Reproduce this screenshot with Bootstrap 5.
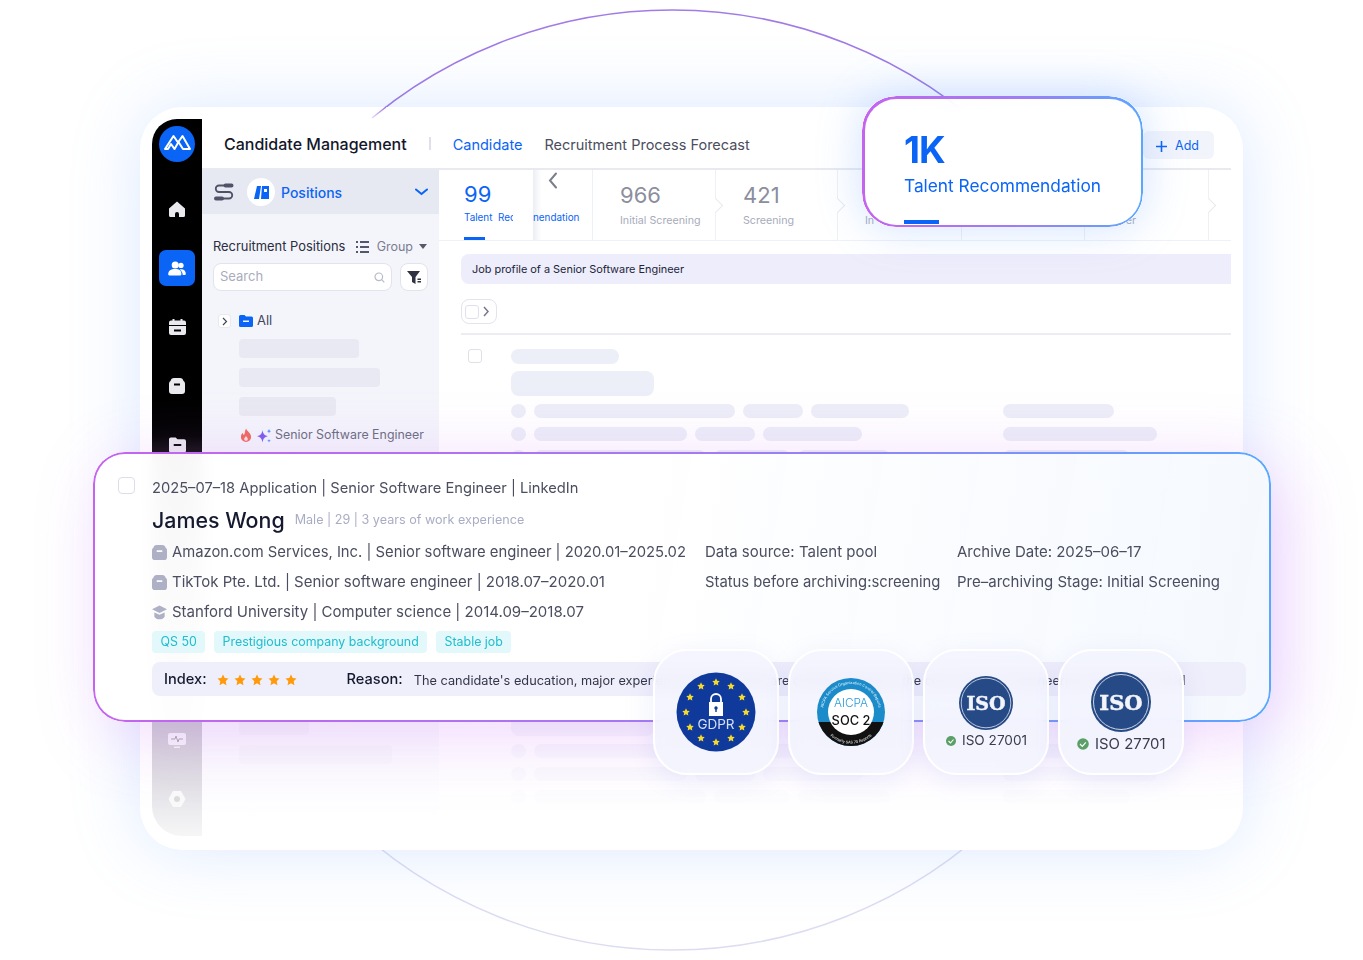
<!DOCTYPE html>
<html lang="en">
  <head>
    <meta charset="UTF-8" />
    <meta name="viewport" content="width=device-width, initial-scale=1.0" />
    <title>Candidate Management</title>
    <link href="https://cdn.jsdelivr.net/npm/bootstrap@5.3.0/dist/css/bootstrap.min.css" rel="stylesheet" />
    <style>
      body { background: #fff; font-family: Inter, "Noto Sans", sans-serif; color: #4b4e60; overflow: hidden; }
      .stage { position: relative; width: 1363px; height: 960px; overflow: hidden; padding: 107px 0 0 140px; }
      .arc { position: absolute; left: 0; top: 0; }
      .arc-tip { position: absolute; left: 368px; top: 100px; }

      /* app window */
      .app-window { position: relative; width: 1103px; height: 743px; padding: 12px 12px 14px; background: #fff; border-radius: 42px; box-shadow: 0 0 70px rgba(110, 165, 255, .24); }
      .rail { width: 50px; flex: none; border-radius: 25px 0 0 30px; background: linear-gradient(#000 0, #000 44%, #b9b6c0 78%, #f6f6f7 100%); }
      .rail-logo { width: 36px; height: 36px; margin: 7px auto 29px; }
      .rail-item { width: 36px; height: 36px; margin: 0 auto 23px; border-radius: 7px; }
      .rail-item.active { background: #0a64f5; }
      .app-column { min-width: 0; min-height: 0; }
      .app-head { flex: none; height: 51px; padding-left: 22px; border-bottom: 2px solid #e8e9f1; }
      .app-title { font-size: 16px; font-weight: 450; color: #14172a; }
      .head-sep { width: 2px; height: 13px; background: #dfe1ea; margin: 0 22px 0 22px; }
      .head-tab { font-size: 14.5px; margin: 3px 22px 0 0; color: #4b4e60; }
      .head-tab.on { color: #0a64f5; }
      .add-btn { width: 71px; height: 28px; margin: 2px 17px 0 auto; padding: 3px 3px 0 0; background: #f2f4fb; border-radius: 6px; color: #0a64f5; font-size: 12.5px; gap: 7px; }
      .app-body { min-height: 0; overflow: hidden; }

      .side-panel { width: 237px; flex: none; background: #f4f5fb; }
      .side-head { height: 44px; background: #e7e9f2; padding: 0 11px 0 12px; }
      .side-disc { width: 28px; height: 28px; border-radius: 50%; background: #fff; margin: 0 6px 0 13px; }
      .side-name { color: #0a64f5; font-size: 14px; font-weight: 500; }
      .side-title { height: 33px; margin: 16px 11px 0; font-size: 12.9px; color: #2b2e40; }
      .group-label { color: #7a7d90; font-size: 12.5px; margin: 1px 6px 0 8px; }
      .side-caret { margin-right: 1px; }
      .search-row { margin: 0 11px; }
      .search-box { height: 28px; width: 179px; background: #fff; border: 1px solid #e2e3ec; border-radius: 8px; padding: 0 6px; font-size: 13px; color: #a9acbd; }
      .filter-box { width: 28px; height: 28px; background: #fff; border: 1px solid #e2e3ec; border-radius: 8px; }
      .tree-root { height: 14px; margin: 23px 0 11px 16px; font-size: 13px; color: #44475a; }
      .tree-chev { width: 13px; height: 14px; background: #fff; border: 1px solid #e8e9f1; border-radius: 3px; margin-right: 8px; }
      .tree-rows { padding-left: 37px; }
      .sk-bar { background: #e8e9f2; border-radius: 4px; height: 19px; margin-bottom: 10px; }
      .hot-row { height: 19px; margin-bottom: 10px; padding-left: 1px; font-size: 12.4px; color: #6a6d80; gap: 5px; white-space: nowrap; }
      .hot-row span { margin-left: -1px; }

      .main-pane { flex: 1; min-width: 0; }
      .step-row { height: 71px; border-bottom: 1px solid #f0f1f6; position: relative; }
      .step-cell { position: relative; height: 70px; padding: 13px 0 0 27px; border-right: 1px solid #eff0f5; white-space: nowrap; }
      .step-cell::after { content: ""; position: absolute; right: -6px; top: 30px; width: 11px; height: 11px; background: #fff; border-top: 1px solid #e9eaf0; border-right: 1px solid #e9eaf0; transform: rotate(45deg); }
      .step-num { font-size: 22px; line-height: 24px; color: #8b8e9e; margin-bottom: 6px; }
      .step-cap { font-size: 10.7px; line-height: 16px; color: #a8abbb; }
      .step-first { width: 74px; overflow: hidden; border: 0; padding: 12px 0 0 25px; }
      .step-first::after, .step-gap::after { display: none; }
      .step-first .step-num, .step-first .step-cap, .step-gap .step-cap { color: #0a64f5; font-size: 9.9px; }
      .step-first .step-num { font-size: 22px; margin-bottom: 3px; }
      .step-first .step-cap { margin-top: 0; }
      .step-bar { position: absolute; left: 25px; bottom: 0; width: 21px; height: 3px; background: #0a64f5; }
      .step-blank { width: 20px; background: #fff; }
      .step-gap { width: 60px; padding: 39px 0 0 0; background: linear-gradient(90deg, #eceef3, #fff 14%); overflow: hidden; }
      .back-chev { position: absolute; left: 109px; top: 2px; }
      .main-body { padding: 13px 0 0 22px; }
      .profile-bar { height: 30px; background: #eeedfb; border-radius: 8px 0 0 8px; padding-left: 11px; font-size: 10.9px; line-height: 30px; color: #22253a; }
      .select-box { width: 36px; height: 25px; margin: 15px 0 9px; border: 1px solid #e3e4ec; border-radius: 8px; padding-left: 3px; }
      .box-tick { display: block; width: 14px; height: 14px; border: 1px solid #dfe0ea; border-radius: 3px; background: #fff; flex: none; }
      .list-line { border-top: 2px solid #ecedf3; padding-top: 14px; height: 10px; }
      .rec { height: 340px; padding-left: 7px; gap: 29px; }
      .rec-fill { background: #eceef8; border-radius: 8px; height: 14px; flex: none; }
      .rec-dot { width: 15px; border-radius: 50%; }
      .rec-row { margin-bottom: 9px; gap: 8px; }
      .rec-left { width: 484px; flex: none; }
      .fade-veil { position: absolute; left: 62px; right: 12px; top: 500px; bottom: 0; border-radius: 0 0 42px 0; background: linear-gradient(rgba(255, 255, 255, 0) 20%, rgba(255, 255, 255, .7) 60%, rgba(255, 255, 255, .96) 85%, #fff 100%); }

      /* floating cards */
      .glow-edge { position: relative; }
      .glow-edge::before { content: ""; position: absolute; inset: 0; padding: 2px; border-radius: inherit; background: linear-gradient(90deg, #c564ee 0, #9f7cf5 55%, #5aa7ff 100%); -webkit-mask: linear-gradient(#000 0 0) content-box, linear-gradient(#000 0 0); -webkit-mask-composite: xor; mask-composite: exclude; pointer-events: none; }
      .stat-card { position: absolute; left: 862px; top: 96px; width: 281px; height: 131px; border-radius: 34px; padding: 37px 0 0 42px; background: rgba(255, 255, 255, .86); -webkit-backdrop-filter: blur(10px); backdrop-filter: blur(10px); box-shadow: 0 0 45px rgba(90, 155, 255, .28); color: #0a64f5; overflow: hidden; }
      .stat-card::before { padding: 2.5px; }
      .stat-num { font-size: 37px; line-height: 34px; font-weight: 700; letter-spacing: -1px; }
      .stat-cap { font-size: 17.3px; line-height: 24px; margin-top: 7px; }
      .stat-bar { position: absolute; left: 42px; bottom: 3px; width: 35px; height: 4px; background: #0a64f5; }

      .person-card { position: absolute; left: 93px; top: 452px; width: 1178px; height: 270px; border-radius: 32px; padding: 25px 25px 0 59px; background: linear-gradient(100deg, rgba(255, 255, 255, .97) 45%, rgba(244, 248, 254, .94)); -webkit-backdrop-filter: blur(9px); backdrop-filter: blur(9px); box-shadow: 14px 14px 70px rgba(205, 120, 250, .3); }
      .person-tick { position: absolute; left: 25px; top: 25px; width: 17px; height: 17px; border: 1px solid #dcdde8; border-radius: 4px; background: #fff; }
      .person-line { font-size: 14.7px; line-height: 22px; color: #4b4e60; white-space: nowrap; }
      .person-name { font-size: 21.4px; line-height: 30px; font-weight: 500; color: #15192e; margin-right: 10px; }
      .person-meta { font-size: 12.6px; color: #a9adc4; padding-top: 2px; }
      .person-top { height: 35px; margin-top: 3px; }
      .info-grid { display: grid; font-size: 15px; grid-template-columns: 553px 252px auto; grid-auto-rows: 30px; align-items: center; }
      .line-tight { font-size: 14.8px; }
      .info-lead { gap: 5px; }
      .tag-pill { background: #e2f8fb; color: #1fbdd0; font-size: 12.4px; line-height: 22px; padding: 0 8.5px; border-radius: 4px; margin-right: 8.8px; }
      .tag-row { margin-top: 4px; }
      .reason-bar { height: 34px; margin-top: 9px; background: #efeefb; border-radius: 8px; padding: 1px 0 0 12px; white-space: nowrap; overflow: hidden; color: #15192e; }
      .reason-key { font-size: 14.6px; font-weight: 500; }
      .stars { width: 130px; margin-left: 10px; gap: 5px; }
      .reason-txt { font-size: 12.75px; color: #33364a; margin: 2px 0 0 11px; }

      .cert-tile { position: absolute; top: 649px; width: 126px; height: 126px; border-radius: 34px; border: 2px solid #fff; background: rgba(243, 244, 254, .9); -webkit-backdrop-filter: blur(8px); backdrop-filter: blur(8px); box-shadow: 0 6px 24px rgba(130, 140, 230, .14); }
      .cert-a { left: 653px; }
      .cert-b { left: 788px; }
      .cert-c { left: 923px; }
      .cert-d { left: 1058px; }
      .cert-tile svg { display: block; }
    </style>
  </head>

  <body>
    <div class="stage">
      <svg class="arc" width="1363" height="960" viewBox="0 0 1363 960">
        <defs>
          <linearGradient id="arcLine" x1="0" y1="0" x2="0" y2="1">
            <stop offset="0" stop-color="#a27ce6" />
            <stop offset=".2" stop-color="#9a6fdc" />
            <stop offset=".9" stop-color="#dcdcf2" />
          </linearGradient>
        </defs>
        <circle cx="672" cy="480" r="470" fill="none" stroke="url(#arcLine)" stroke-width="1.5" />
      </svg>

      <!-- App window -->
      <div class="app-window d-flex">
        <div class="rail">
          <div class="rail-logo">
            <svg width="36" height="36" viewBox="0 0 36 36"><circle cx="18" cy="18" r="18" fill="#0a64f5" /><path d="M6 23 14.500 10l4.500 6.500L23.500 10 31 23h-7l-4.500-7-4 7-3.500-5-3 5z" fill="none" stroke="#fff" stroke-width="2" stroke-linejoin="round" /></svg>
          </div>
          <div class="rail-item d-flex align-items-center justify-content-center">
            <svg width="16" height="16" viewBox="0 0 16 16"><path d="M8 .5.600 7a1 1 0 0 0-.6 1v6.500A1.500 1.500 0 0 0 1.500 16H6v-3a2 2 0 0 1 4 0v3h4.500a1.500 1.500 0 0 0 1.500-1.500V8a1 1 0 0 0-.6-1z" fill="#e9e9ee" /></svg>
          </div>
          <div class="rail-item active d-flex align-items-center justify-content-center">
            <svg width="18" height="15" viewBox="0 0 20 17" fill="#fff"><circle cx="8" cy="4.500" r="4" /><path d="M0 15c0-4 3-6 8-6s7 2 7 6c0 1-1 1.500-2 1.500H2C1 16.500 0 16 0 15z" /><circle cx="14.500" cy="5" r="3" /><path d="M13 9.500c4-1 7 1 7 5 0 1-.5 1.500-1.500 1.500H16.500c0-2.500-1-4.500-3.500-6.500z" /></svg>
          </div>
          <div class="rail-item d-flex align-items-center justify-content-center">
            <svg width="17" height="16" viewBox="0 0 17 16" fill="#e9e9ee"><path d="M3.500 0h2v1.500h6V0h2v1.500H15A2 2 0 0 1 17 3.500V6H0V3.500a2 2 0 0 1 2-2h1.500z" /><path d="M0 7h17v7a2 2 0 0 1-2 2H2a2 2 0 0 1-2-2zm5 3.500v2h7v-2z" fill-rule="evenodd" /></svg>
          </div>
          <div class="rail-item d-flex align-items-center justify-content-center">
            <svg width="16" height="16" viewBox="0 0 16 16" fill="#e9e9ee"><path d="M5 0h6c2 0 3 1 3.500 3C15.500 3.500 16 4.500 16 6v7a3 3 0 0 1-3 3H3a3 3 0 0 1-3-3V6c0-1.500.5-2.500 1.500-3C2 1 3 0 5 0zm0 5.500v2h6v-2z" fill-rule="evenodd" /></svg>
          </div>
          <div class="rail-item d-flex align-items-center justify-content-center">
            <svg width="17" height="16" viewBox="0 0 18 16" fill="#e9e9ee"><path d="M2 0h5l2 2h7a2 2 0 0 1 2 2v10a2 2 0 0 1-2 2H2a2 2 0 0 1-2-2V2a2 2 0 0 1 2-2zm3 7v2h8V7z" fill-rule="evenodd" /></svg>
          </div>
          <div class="rail-item"></div>
          <div class="rail-item"></div>
          <div class="rail-item"></div>
          <div class="rail-item"></div>
          <div class="rail-item d-flex align-items-center justify-content-center">
            <svg width="18" height="15" viewBox="0 0 18 15"><path d="M2 0h14a2 2 0 0 1 2 2v8a2 2 0 0 1-2 2H2a2 2 0 0 1-2-2V2a2 2 0 0 1 2-2z" fill="#f6f6f8" /><path d="M6 13.500h6V15H6z" fill="#f6f6f8" /><path d="M3 6h4l1-3 2 6 1-3h4" fill="none" stroke="#a9a7b0" stroke-width="1" /></svg>
          </div>
          <div class="rail-item d-flex align-items-center justify-content-center">
            <svg width="18" height="18" viewBox="0 0 18 18"><path d="M5 1h8l4.500 8-4.500 8H5L.5 9z" fill="#fafafa" /><circle cx="9" cy="9" r="3" fill="#dcdcdf" /></svg>
          </div>
        </div>

        <div class="app-column flex-grow-1 d-flex flex-column">
          <div class="app-head d-flex align-items-center">
            <span class="app-title">Candidate Management</span>
            <span class="head-sep"></span>
            <span class="head-tab on">Candidate</span>
            <span class="head-tab">Recruitment Process Forecast</span>
            <span class="add-btn d-flex align-items-center justify-content-center">
              <svg width="13" height="13" viewBox="0 0 13 13"><path d="M6.500 1v11M1 6.500h11" stroke="#0a64f5" stroke-width="1.600" /></svg>Add
            </span>
          </div>

          <div class="app-body d-flex flex-grow-1">
            <div class="side-panel">
              <div class="side-head d-flex align-items-center">
                <svg width="20" height="20" viewBox="0 0 20 20" fill="none" stroke="#50526a"><path d="M14 3.500H5a3.200 3.200 0 0 0 0 6.500h10a3.200 3.200 0 0 1 0 6.500H6" stroke-width="1.800" /><path d="M11.500 3.500h6M2 16.500h6" stroke-width="4" stroke-linecap="round" /></svg>
                <span class="side-disc d-flex align-items-center justify-content-center">
                  <svg width="15" height="13" viewBox="0 0 15 13" fill="#0a64f5"><path d="M3 0h4L5 13H0z" /><path d="M8 0h7v13H7zm2 3v3h3V3z" fill-rule="evenodd" /></svg>
                </span>
                <span class="side-name flex-grow-1">Positions</span>
                <svg width="13" height="8" viewBox="0 0 13 8"><path d="M1 1.500 6.500 6 12 1.500" fill="none" stroke="#0a64f5" stroke-width="2" stroke-linecap="round" /></svg>
              </div>
              <div class="side-title d-flex align-items-center">
                <span>Recruitment Positions</span>
                <svg class="ms-auto" width="13" height="12" viewBox="0 0 13 12" fill="#55586a"><path d="M0 0h2v2H0zm4 0h9v2H4zM0 5h2v2H0zm4 0h9v2H4zm-4 5h2v2H0zm4 0h9v2H4z" /></svg>
                <span class="group-label">Group</span>
                <svg class="side-caret" width="8" height="5" viewBox="0 0 8 5"><path d="M0 0h8L4 5z" fill="#55586a" /></svg>
              </div>
              <div class="search-row d-flex justify-content-between">
                <div class="search-box d-flex align-items-center justify-content-between">
                  <span>Search</span>
                  <svg width="11" height="11" viewBox="0 0 11 11" fill="none" stroke="#b8bac8" stroke-width="1.200"><circle cx="4.800" cy="4.800" r="3.800" /><path d="m7.700 7.700 2.600 2.600" /></svg>
                </div>
                <div class="filter-box d-flex align-items-center justify-content-center">
                  <svg width="15" height="15" viewBox="0 0 15 15" fill="#2f3242"><path d="M0 1h13L8.500 7v7L5 12V7z" /><path d="M10.500 8.500H14V10h-3.500zm0 2.500H14v1.500h-3.500z" /></svg>
                </div>
              </div>
              <div class="tree-root d-flex align-items-center">
                <span class="tree-chev d-flex align-items-center justify-content-center">
                  <svg width="6" height="9" viewBox="0 0 6 9"><path d="m1 1 3.500 3.500L1 8" fill="none" stroke="#44475a" stroke-width="1.200" /></svg>
                </span>
                <svg width="14" height="12" viewBox="0 0 14 12" fill="#0a64f5" class="me-1"><path d="M1.500 0h4L7 1.500h5.500A1.500 1.500 0 0 1 14 3v7.500a1.500 1.500 0 0 1-1.500 1.500h-11A1.500 1.500 0 0 1 0 10.500v-9A1.500 1.500 0 0 1 1.500 0zM4 5.500V7h6V5.500z" fill-rule="evenodd" /></svg>
                <span>All</span>
              </div>
              <div class="tree-rows" id="treeRows"></div>
            </div>

            <div class="main-pane">
              <div class="step-row d-flex">
                <div class="step-cell step-first">
                  <div class="step-num">99</div>
                  <div class="step-cap">Talent&nbsp; Rec</div>
                  <span class="step-bar"></span>
                </div>
                <div class="step-blank"></div>
                <div class="step-cell step-gap"><div class="step-cap">nendation</div></div>
                <div class="step-cell" style="width: 123px"><div class="step-num">966</div><div class="step-cap">Initial Screening</div></div>
                <div class="step-cell" style="width: 122px"><div class="step-num">421</div><div class="step-cap">Screening</div></div>
                <div class="step-cell" style="width: 124px"><div class="step-num">&nbsp;</div><div class="step-cap">In</div></div>
                <div class="step-cell" style="width: 123px"></div>
                <div class="step-cell" style="width: 124px"><div class="step-num">&nbsp;</div><div class="step-cap text-end pe-5 me-4">er</div></div>
                <svg class="back-chev" width="10" height="17" viewBox="0 0 10 17"><path d="M8 1.500 2 8.500l6 7" fill="none" stroke="#7b7e8e" stroke-width="2" stroke-linecap="round" /></svg>
              </div>
              <div class="main-body">
                <div class="profile-bar">Job profile of a Senior Software Engineer</div>
                <div class="select-box d-flex align-items-center gap-1">
                  <span class="box-tick"></span>
                  <svg width="6" height="11" viewBox="0 0 6 11"><path d="m1 1 4 4.500L1 10" fill="none" stroke="#77798a" stroke-width="1.500" /></svg>
                </div>
                <div class="list-line"></div>
                <div id="recList"></div>
              </div>
            </div>
          </div>
        </div>
        <div class="fade-veil"></div>
      </div>

      <!-- tail of the arc that runs over the window corner -->
      <svg class="arc-tip" width="26" height="20" viewBox="0 0 26 20">
        <defs>
          <linearGradient id="tipLine" x1="1" y1="0" x2="0" y2="1">
            <stop offset="0" stop-color="#9a6fdc" />
            <stop offset="1" stop-color="#e6dcf8" />
          </linearGradient>
        </defs>
        <path d="M18 7 4 18" fill="none" stroke="url(#tipLine)" stroke-width="1.500" />
      </svg>

      <!-- Talent recommendation stat -->
      <div class="stat-card glow-edge">
        <div class="stat-num">1K</div>
        <div class="stat-cap">Talent Recommendation</div>
        <span class="stat-bar"></span>
      </div>

      <!-- Candidate card -->
      <div class="person-card glow-edge">
        <span class="person-tick"></span>
        <div class="person-line">2025–07–18 Application | Senior Software Engineer | LinkedIn</div>
        <div class="person-top d-flex align-items-center">
          <span class="person-name">James Wong</span>
          <span class="person-meta">Male | 29 | 3 years of work experience</span>
        </div>
        <div class="info-grid person-line">
          <div class="info-lead line-tight d-flex align-items-center">
            <svg width="15" height="15" viewBox="0 0 16 16" fill="#aeb0c6"><path d="M5 0h6c2 0 3 1 3.500 3C15.500 3.500 16 4.500 16 6v7a3 3 0 0 1-3 3H3a3 3 0 0 1-3-3V6c0-1.500.5-2.500 1.500-3C2 1 3 0 5 0zm0 5.500v2h6v-2z" fill-rule="evenodd" /></svg>
            <span>Amazon.com Services, Inc. | Senior software engineer | 2020.01–2025.02</span>
          </div>
          <div>Data source: Talent pool</div>
          <div>Archive Date: 2025–06–17</div>
          <div class="info-lead d-flex align-items-center">
            <svg width="15" height="15" viewBox="0 0 16 16" fill="#aeb0c6"><path d="M5 0h6c2 0 3 1 3.500 3C15.500 3.500 16 4.500 16 6v7a3 3 0 0 1-3 3H3a3 3 0 0 1-3-3V6c0-1.500.5-2.500 1.500-3C2 1 3 0 5 0zm0 5.500v2h6v-2z" fill-rule="evenodd" /></svg>
            <span>TikTok Pte. Ltd. | Senior software engineer | 2018.07–2020.01</span>
          </div>
          <div class="line-tight">Status before archiving:screening</div>
          <div>Pre–archiving Stage: Initial Screening</div>
          <div class="info-lead d-flex align-items-center">
            <svg width="15" height="15" viewBox="0 0 16 15" fill="#aeb0c6"><path d="M8 0l8 4-8 4-8-4z" /><path d="M2.500 7.500 8 10l5.500-2.500v4.500c-1 1.800-3 2.800-5.500 2.800s-4.500-1-5.500-2.800z" /></svg>
            <span>Stanford University | Computer science | 2014.09–2018.07</span>
          </div>
        </div>
        <div class="tag-row d-flex">
          <span class="tag-pill">QS 50</span>
          <span class="tag-pill">Prestigious company background</span>
          <span class="tag-pill">Stable job</span>
        </div>
        <div class="reason-bar d-flex align-items-center">
          <span class="reason-key">Index:</span>
          <span class="stars d-flex" id="stars"></span>
          <span class="reason-key">Reason:</span>
          <span class="reason-txt">The candidate's education, major experience and skill sets are closely aligned to the core needs of engineering roles in this field</span>
        </div>
      </div>

      <!-- Certifications -->
      <div class="cert-tile cert-a">
        <svg width="122" height="122" viewBox="0 0 122 122">
          <circle cx="61" cy="61" r="39.500" fill="#0f3a9c" />
          <g id="euStars"></g>
          <path d="M56 51v-3a5 5 0 0 1 10 0v3" fill="none" stroke="#fff" stroke-width="1.800" />
          <path d="M54 51h14v14H54z" fill="#fff" />
          <circle cx="61" cy="57" r="1.700" fill="#0f3a9c" /><path d="M60.300 57h1.400v4h-1.400z" fill="#0f3a9c" />
          <text x="61" y="78" text-anchor="middle" font-family="Inter, sans-serif" font-size="13.500" fill="#d9e0f6">GDPR</text>
        </svg>
      </div>
      <div class="cert-tile cert-b">
        <svg width="122" height="122" viewBox="0 0 122 122">
          <defs>
            <path id="ringTop" d="M34.850 71A28 28 0 1 1 87.150 71" />
            <path id="ringLow" d="M31.100 71A31.500 31.500 0 0 0 90.900 71" />
            <clipPath id="ringCut"><rect x="20" y="71" width="82" height="30" /></clipPath>
          </defs>
          <circle cx="61" cy="61" r="34" fill="#1b8bca" />
          <circle cx="61" cy="61" r="34" fill="#111" clip-path="url(#ringCut)" />
          <circle cx="61" cy="61" r="23" fill="#fff" />
          <text font-family="Inter, sans-serif" font-size="3.800" fill="#e8f5fd"><textPath href="#ringTop" startOffset="50%" text-anchor="middle">AICPA Service Organization Control Reports</textPath></text>
          <text font-family="Inter, sans-serif" font-size="3.800" fill="#fff"><textPath href="#ringLow" startOffset="50%" text-anchor="middle">Formerly SAS 70 Reports</textPath></text>
          <text x="61" y="56" text-anchor="middle" font-family="Inter, sans-serif" font-size="11.800" font-weight="300" fill="#2c9bdb">AICPA</text>
          <text x="61" y="74" text-anchor="middle" font-family="Inter, sans-serif" font-size="12.800" font-weight="500" fill="#111">SOC 2</text>
        </svg>
      </div>
      <div class="cert-tile cert-c">
        <svg width="122" height="122" viewBox="0 0 122 122">
          <circle cx="61" cy="52" r="27" fill="#264a85" />
          <circle cx="61" cy="52" r="24.800" fill="none" stroke="#dfe4f1" stroke-width=".8" />
          <text x="61" y="59" text-anchor="middle" font-family="DejaVu Serif, serif" font-weight="700" font-size="19" stroke="#f3f5fa" stroke-width=".5" fill="#f3f5fa">ISO</text>
          <circle cx="26" cy="90" r="5" fill="#5a9f66" />
          <path d="m23.500 90 2 2 3-3.500" fill="none" stroke="#fff" stroke-width="1.100" />
          <text x="37" y="94" font-family="Inter, sans-serif" font-size="13.600" fill="#3a3d4e">ISO 27001</text>
        </svg>
      </div>
      <div class="cert-tile cert-d">
        <svg width="122" height="122" viewBox="0 0 122 122">
          <circle cx="61" cy="51" r="30" fill="#264a85" />
          <circle cx="61" cy="51" r="27.500" fill="none" stroke="#dfe4f1" stroke-width=".9" />
          <text x="61" y="59" text-anchor="middle" font-family="DejaVu Serif, serif" font-weight="700" font-size="21" stroke="#f3f5fa" stroke-width=".5" fill="#f3f5fa">ISO</text>
          <circle cx="23" cy="93" r="5.800" fill="#5a9f66" />
          <path d="m20 93 2.300 2.300 3.500-4" fill="none" stroke="#fff" stroke-width="1.200" />
          <text x="35" y="98" font-family="Inter, sans-serif" font-size="14.900" fill="#3a3d4e">ISO 27701</text>
        </svg>
      </div>
    </div>

    <script>
      // left tree skeletons
      const treeRows = document.getElementById('treeRows');
      const treeWidths = [120, 141, 97, 0, 153, 121, 70, 153, 141, 97, 120, 153, 121, 70, 153];
      treeWidths.forEach((w) => {
        if (w === 0) {
          treeRows.insertAdjacentHTML('beforeend', '<div class="hot-row d-flex align-items-center"><svg width="12" height="15" viewBox="0 0 13 15"><path d="M6.500 0c1 3 5.500 5 5.500 9a5.500 5.500 0 0 1-11 0c0-2 1-3.500 2-4.500 0 1.500.7 2.300 1.500 2.300C5.500 5 5.200 2.500 6.500 0z" fill="#f0695e"/><path d="M6.500 8c.6 1.200 2 2 2 3.300a2 2 0 0 1-4 0c0-1.300 1.400-2 2-3.300z" fill="#fde0da"/></svg><svg width="14" height="14" viewBox="0 0 14 14"><path d="M5.500 1c.6 4 2 5.400 5.500 6.200-3.500.8-4.900 2.200-5.500 6.300-.6-4.100-2-5.500-5.500-6.300C3.500 6.400 4.900 5 5.500 1z" fill="#7b5cf0"/><path d="M12 0l.6 1.600L14 2.200l-1.400.6L12 4.400l-.6-1.600L10 2.200l1.400-.6zM12 10l.5 1.200 1.300.5-1.300.5L12 13.500l-.5-1.300-1.300-.5 1.300-.5z" fill="#3f8cff"/></svg><span>Senior Software Engineer</span></div>');
        } else {
          const bar = document.createElement('div');
          bar.className = 'sk-bar';
          bar.style.width = w + 'px';
          treeRows.appendChild(bar);
        }
      });

      // candidate list skeletons
      const rows = [[201, 60, 98, 111], [153, 60, 99, 154], [172, 76, 92, 127]];
      let html = '';
      for (let r = 0; r < 2; r++) {
        html += '<div class="rec d-flex"><span class="box-tick"></span><div class="flex-grow-1">';
        html += '<div class="rec-fill" style="width:108px;height:15px;margin-bottom:7px"></div>';
        html += '<div class="rec-fill" style="width:143px;height:25px;margin-bottom:8px"></div>';
        rows.forEach((row) => {
          html += '<div class="rec-row d-flex"><div class="rec-left d-flex gap-2"><span class="rec-fill rec-dot"></span>';
          for (let i = 0; i < 3; i++) html += '<span class="rec-fill" style="width:' + row[i] + 'px"></span>';
          html += '</div><span class="rec-fill" style="width:' + row[3] + 'px"></span></div>';
        });
        html += '</div></div>';
      }
      document.getElementById('recList').innerHTML = html;

      // rating stars
      const star = '<svg width="12" height="12" viewBox="0 0 24 24"><path d="M12 1l3.400 7.200 7.600 1-5.600 5.400 1.500 7.900L12 18.600l-6.900 3.900 1.500-7.900L1 9.200l7.600-1z" fill="#ff9a0a"/></svg>';
      document.getElementById('stars').innerHTML = star.repeat(5);

      // EU ring on the GDPR badge
      let eu = '';
      for (let i = 0; i < 12; i++) {
        const a = (i * 30 * Math.PI) / 180;
        const x = 61 + 30 * Math.sin(a);
        const y = 61 - 30 * Math.cos(a);
        eu += '<path transform="translate(' + x.toFixed(1) + ' ' + y.toFixed(1) + ') scale(.34) translate(-12 -12)" d="M12 1l3.400 7.200 7.600 1-5.600 5.400 1.500 7.900L12 18.600l-6.900 3.900 1.500-7.900L1 9.200l7.600-1z" fill="#f6d92e"/>';
      }
      document.getElementById('euStars').innerHTML = eu;
    </script>
    <script src="https://cdn.jsdelivr.net/npm/bootstrap@5.3.0/dist/js/bootstrap.bundle.min.js"></script>
  </body>
</html>
